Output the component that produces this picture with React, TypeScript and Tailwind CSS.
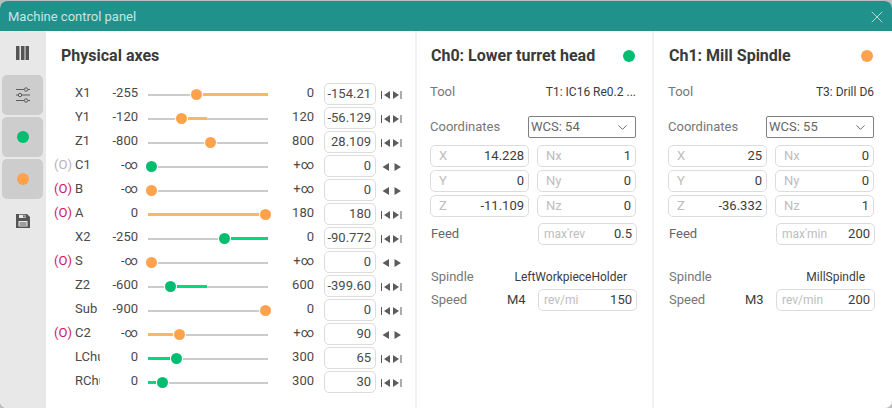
import { ChevronDown, X } from "lucide-react";

type Axis = {
  name: string;
  min: string;
  max: string;
  value: string;
  pos: number;
  fill?: [number, number];
  color: "orange" | "green";
  marker?: "on" | "off";
  rotary?: boolean;
};

const axes: Axis[] = [
  { name: "X1", min: "-255", max: "0", value: "-154.21", pos: 48.5, fill: [55, 120], color: "orange" },
  { name: "Y1", min: "-120", max: "120", value: "-56.129", pos: 33, fill: [40, 59], color: "orange" },
  { name: "Z1", min: "-800", max: "800", value: "28.109", pos: 62.5, color: "orange" },
  { name: "C1", min: "-∞", max: "+∞", value: "0", pos: 3.5, color: "green", marker: "off", rotary: true },
  { name: "B", min: "-∞", max: "+∞", value: "0", pos: 3.5, color: "orange", marker: "on", rotary: true },
  { name: "A", min: "0", max: "180", value: "180", pos: 117.5, fill: [0, 112], color: "orange", marker: "on" },
  { name: "X2", min: "-250", max: "0", value: "-90.772", pos: 76.5, fill: [83, 120], color: "green" },
  { name: "S", min: "-∞", max: "+∞", value: "0", pos: 3.5, color: "orange", marker: "on", rotary: true },
  { name: "Z2", min: "-600", max: "600", value: "-399.60", pos: 22, fill: [29, 59], color: "green" },
  { name: "Sub", min: "-900", max: "0", value: "0", pos: 117.5, color: "orange" },
  { name: "C2", min: "-∞", max: "+∞", value: "90", pos: 31.5, fill: [0, 25], color: "orange", marker: "on", rotary: true },
  { name: "LChuck", min: "0", max: "300", value: "65", pos: 28, fill: [0, 22], color: "green" },
  { name: "RChuck", min: "0", max: "300", value: "30", pos: 14, fill: [0, 8], color: "green" },
];

function Slider({ axis }: { axis: Axis }) {
  const thumb = axis.color === "green" ? "bg-[#00bd6f]" : "bg-[#ffa24d]";
  const bar = axis.color === "green" ? "bg-[#00d97e]" : "bg-[#ffb65c]";
  return (
    <div className="relative mt-px h-[11px] w-[120px]">
      <div className="absolute left-0 right-0 top-[5px] h-[1.5px] bg-[#cccccc]" />
      {axis.fill && (
        <div
          className={`absolute top-[4px] h-[3px] ${bar}`}
          style={{ left: axis.fill[0], width: axis.fill[1] - axis.fill[0] }}
        />
      )}
      <div
        className={`absolute top-0 h-[11px] w-[11px] rounded-full ring-1 ring-white ${thumb}`}
        style={{ left: axis.pos - 5.5 }}
      />
    </div>
  );
}

function Stepper({ rotary }: { rotary?: boolean }) {
  return (
    <svg width="22" height="12" viewBox="0 0 22 12" className="ml-[5px] mt-px fill-[#5c5c5c]">
      {!rotary && <rect x="0" y="2" width="1" height="8" />}
      <path d={rotary ? "M8 2v8L1.5 6z" : "M9 2v8L3 6z"} />
      <path d={rotary ? "M13.5 2v8l6.5-4z" : "M12 2v8l6-4z"} />
      {!rotary && <rect x="19.5" y="2" width="1" height="8" />}
    </svg>
  );
}

function AxisRow({ axis }: { axis: Axis }) {
  return (
    <div className="flex h-6 items-center">
      <span
        className={`w-[21px] pb-0.5 text-[13px] ${axis.marker === "on" ? "text-[#cc1a5c]" : "text-[#b4b4b4]"}`}
      >
        {axis.marker ? "(O)" : ""}
      </span>
      <span className="w-[25px] overflow-hidden whitespace-nowrap pb-0.5 text-[#4a4a4a]">{axis.name}</span>
      <span className="w-[38px] pb-0.5 text-right text-[#4a4a4a]">{axis.min}</span>
      <div className="ml-[10px]">
        <Slider axis={axis} />
      </div>
      <span className="w-[46px] pb-0.5 text-right text-[#4a4a4a]">{axis.max}</span>
      <div className="ml-[10px] flex h-[22px] w-[52px] items-center justify-end rounded-[5px] border border-[#dcdcdc] pr-[4px] text-[#4a4a4a]">
        {axis.value}
      </div>
      <Stepper rotary={axis.rotary} />
    </div>
  );
}

function Field({ label, value, tight }: { label: string; value: string; tight?: boolean }) {
  return (
    <div
      className={`flex h-[22px] w-[99px] items-center justify-between rounded-[5px] border border-[#dcdcdc] pr-[4px] ${tight ? "pl-[5px]" : "pl-[8px]"}`}
    >
      <span className={`text-[#bdbdbd] ${tight ? "text-xs" : ""}`}>{label}</span>
      <span className="text-[#3c3c3c]">{value}</span>
    </div>
  );
}

type Channel = {
  title: string;
  dot: string;
  tool: string;
  wcs: string;
  coords: [string, string][];
  feedUnit: string;
  feed: string;
  spindle: string;
  direction: string;
  speedUnit: string;
  speed: string;
};

function ChannelPanel({ ch, className }: { ch: Channel; className: string }) {
  return (
    <section className={`border-l-2 border-[#f2f2f2] pt-[13px] ${className}`}>
      <div className="flex h-6 w-[206px] items-center justify-between pl-px">
        <h2 className="text-base font-bold text-[#3a3a3a]">{ch.title}</h2>
        <span className="mr-[1px] flex">
          <span className={`h-3 w-3 rounded-full ${ch.dot}`} />
        </span>
      </div>

      <div className="mt-[13px] flex h-[22px] w-[206px] items-center justify-between">
        <span className="text-[#777777]">Tool</span>
        <span className="text-xs text-[#3c3c3c]">{ch.tool}</span>
      </div>

      <div className="mt-[13px] flex h-[22px] w-[206px] items-center justify-between">
        <span className="text-[#777777]">Coordinates</span>
        <div className="flex h-[22px] w-[108px] items-center justify-between rounded-[2px] border border-[#808080] pl-[2px] pr-[5px] text-[#666666]">
          {ch.wcs}
          <ChevronDown size={15} strokeWidth={1.25} className="mt-px text-[#444444]" />
        </div>
      </div>

      <div className="mt-[7px] grid w-[206px] grid-cols-[99px_99px] gap-x-[8px] gap-y-[3px]">
        {ch.coords.map(([label, value]) => (
          <Field key={label} label={label} value={value} />
        ))}
      </div>

      <div className="w-[207px] pl-px">
        <div className="mt-[6px] flex items-center justify-between">
          <span className="text-[#666666]">Feed</span>
          <Field label={ch.feedUnit} value={ch.feed} tight />
        </div>
        <div className="mt-[21px] flex h-[22px] items-center justify-between pr-[10px]">
          <span className="text-[#777777]">Spindle</span>
          <span className="text-xs text-[#3c3c3c]">{ch.spindle}</span>
        </div>
        <div className="mt-[1px] flex items-center">
          <span className="w-[76px] text-[#777777]">Speed</span>
          <span className="w-[17px] text-right text-[#3c3c3c]">{ch.direction}</span>
          <div className="ml-auto">
            <Field label={ch.speedUnit} value={ch.speed} tight />
          </div>
        </div>
      </div>
    </section>
  );
}

const channels: Channel[] = [
  {
    title: "Ch0: Lower turret head",
    dot: "bg-[#00bd6f]",
    tool: "T1: IC16 Re0.2 ...",
    wcs: "WCS: 54",
    coords: [
      ["X", "14.228"],
      ["Nx", "1"],
      ["Y", "0"],
      ["Ny", "0"],
      ["Z", "-11.109"],
      ["Nz", "0"],
    ],
    feedUnit: "max'rev",
    feed: "0.5",
    spindle: "LeftWorkpieceHolder",
    direction: "M4",
    speedUnit: "rev/mi",
    speed: "150",
  },
  {
    title: "Ch1: Mill Spindle",
    dot: "bg-[#ffa24d]",
    tool: "T3: Drill D6",
    wcs: "WCS: 55",
    coords: [
      ["X", "25"],
      ["Nx", "0"],
      ["Y", "0"],
      ["Ny", "0"],
      ["Z", "-36.332"],
      ["Nz", "1"],
    ],
    feedUnit: "max'min",
    feed: "200",
    spindle: "MillSpindle",
    direction: "M3",
    speedUnit: "rev/min",
    speed: "200",
  },
];

function SideButton({ children }: { children: React.ReactNode }) {
  return (
    <div className="flex h-10 w-[41px] items-center justify-center rounded-[5px] bg-[#cdcdcd]">{children}</div>
  );
}

function Sidebar() {
  return (
    <aside className="flex w-[46px] shrink-0 flex-col items-center bg-[#e8e8e8] pr-[1px] pt-[15px]">
      {/* axis columns */}
      <svg width="14" height="14" viewBox="0 0 14 14" className="mb-[15px] fill-[#555555]">
        <rect x="0" y="0" width="3.5" height="14" />
        <rect x="5" y="0" width="3.5" height="14" />
        <rect x="9.5" y="0" width="3.5" height="14" />
      </svg>
      <div className="flex flex-col gap-[2px]">
        <SideButton>
          <svg width="16" height="16" viewBox="0 0 16 16" fill="none" stroke="#5c5c5c" strokeWidth="1">
            <path d="M1 2.5h8M13 2.5h2M1 8h2M7 8h8M1 13.5h8M13 13.5h2" />
            <circle cx="11" cy="2.5" r="1.7" />
            <circle cx="5" cy="8" r="1.7" />
            <circle cx="11" cy="13.5" r="1.7" />
          </svg>
        </SideButton>
        <SideButton>
          <span className="h-3 w-3 rounded-full bg-[#00bd6f]" />
        </SideButton>
        <SideButton>
          <span className="h-3 w-3 rounded-full bg-[#ffa24d]" />
        </SideButton>
      </div>
      {/* save */}
      <svg width="14" height="14" viewBox="0 0 14 14" className="mt-[15px]">
        <path fill="#555555" d="M0 0h11l3 3v11H0z" />
        <path fill="#e8e8e8" d="M3 0.8h6.5v3.2H3zM2.5 7h9v5.5h-9z" />
        <path fill="#555555" d="M7.2 1.2h1.5v2.2H7.2zM3.5 8.4h7v1h-7zM3.5 10.4h7v1h-7z" />
      </svg>
    </aside>
  );
}

export default function App() {
  return (
    <div className="h-[408px] w-[892px] bg-[#bdbdbd] pt-px font-['Roboto',sans-serif] text-[13px]">
      <div className="flex h-[407px] flex-col overflow-hidden rounded-[7px] bg-white">
        <header className="flex h-[30px] shrink-0 items-center justify-between bg-[#21918c] pl-[8px] pr-[5px] pt-px">
          <span className="text-[#c9e4e2]">Machine control panel</span>
          <X size={20} strokeWidth={0.8} className="text-white" />
        </header>
        <div className="flex flex-1">
          <Sidebar />
          <section className="w-[369px] shrink-0 pl-[8px] pt-[13px]">
            <h1 className="flex h-6 items-center pl-[7px] text-base font-bold text-[#3a3a3a]">Physical axes</h1>
            <div className="mt-[14px]">
              {axes.map((axis) => (
                <AxisRow key={axis.name} axis={axis} />
              ))}
            </div>
          </section>
          <ChannelPanel ch={channels[0]} className="w-[237px] pl-[13px]" />
          <ChannelPanel ch={channels[1]} className="flex-1 pl-[14px]" />
        </div>
      </div>
    </div>
  );
}
